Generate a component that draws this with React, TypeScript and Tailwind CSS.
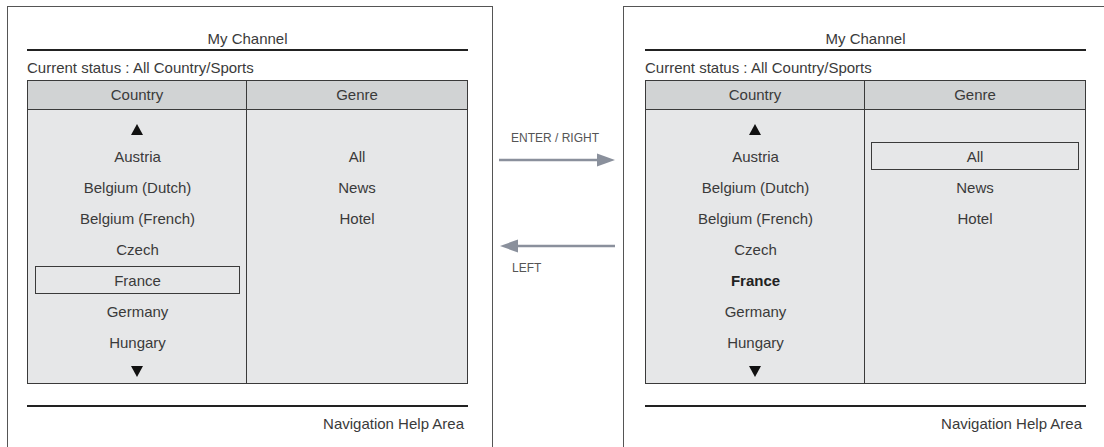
import React from 'react';

const countries = [
  'Austria',
  'Belgium (Dutch)',
  'Belgium (French)',
  'Czech',
  'France',
  'Germany',
  'Hungary',
];

const genres = ['All', 'News', 'Hotel'];

interface RowProps {
  label: string;
  boxed?: boolean;
  bold?: boolean;
  inset: string;
}

const Row: React.FC<RowProps> = ({ label, boxed, bold, inset }) => (
  <div className={`h-[31px] ${inset}`}>
    <div
      className={`h-[28px] pt-[2px] flex items-center justify-center border ${
        boxed ? 'border-[#3a3a3a]' : 'border-transparent'
      } ${bold ? 'font-bold text-[#222]' : ''}`}
    >
      {label}
    </div>
  </div>
);

const Triangle: React.FC<{ down?: boolean }> = ({ down }) => (
  <svg width="12" height="11" viewBox="0 0 12 11">
    <polygon points={down ? '0,0 12,0 6,11' : '6,0 12,11 0,11'} fill="#111" />
  </svg>
);

interface PanelProps {
  side: 'left' | 'right';
}

const Panel: React.FC<PanelProps> = ({ side }) => {
  const left = side === 'left';
  return (
    <div
      className={`shrink-0 w-[486px] h-[470px] border-l border-t border-r border-[#555] ${
        left ? 'ml-[7px]' : ''
      } mt-[6px]`}
    >
      <div className={`w-[441px] ${left ? 'ml-[19px]' : 'ml-[21px]'}`}>
        <div className="pt-[24px] h-[40px] leading-[16px] text-center">My Channel</div>
        <div className="mt-[2px] h-[2px] bg-[#222]" />
        <div className="mt-[9px] leading-[16px]">Current status : All Country/Sports</div>
        <div className="mt-[4px] border border-[#3a3a3a]">
          <div className="flex h-[29px] bg-[#d1d3d4] border-b border-[#3a3a3a]">
            <div className="w-[219px] flex items-center justify-center border-r border-[#3a3a3a]">
              Country
            </div>
            <div className="flex-1 flex items-center justify-center">Genre</div>
          </div>
          <div className="flex bg-[#e6e7e8]">
            <div className="w-[219px] border-r border-[#3a3a3a] pt-[7px] text-center">
              <div className="h-[25px] flex items-center justify-center">
                <Triangle />
              </div>
              {countries.map((c) => (
                <Row
                  key={c}
                  label={c}
                  inset="pl-[7px] pr-[6px]"
                  boxed={left && c === 'France'}
                  bold={!left && c === 'France'}
                />
              ))}
              <div className="h-[24px] flex items-center justify-center">
                <Triangle down />
              </div>
            </div>
            <div className="flex-1 pt-[32px]">
              {genres.map((g) => (
                <Row key={g} label={g} inset="px-[6px]" boxed={!left && g === 'All'} />
              ))}
            </div>
          </div>
        </div>
        <div className="mt-[21px] h-[2px] bg-[#222]" />
        <div className="mt-[9px] leading-[16px] text-right pr-[4px]">Navigation Help Area</div>
      </div>
    </div>
  );
};

const Arrows: React.FC = () => (
  <div className="shrink-0 w-[130px] pt-[131px] text-[12px] leading-[14px] text-[#555]">
    <div className="pl-[18px]">ENTER / RIGHT</div>
    <svg className="mt-[8px] block" width="130" height="14" viewBox="0 0 130 14">
      <line x1="6" y1="7" x2="106" y2="7" stroke="#8a909c" strokeWidth="2.5" />
      <polygon points="104,0.5 122,7 104,13.5" fill="#8a909c" />
    </svg>
    <svg className="mt-[72px] block" width="130" height="14" viewBox="0 0 130 14">
      <polygon points="25,0.5 7,7 25,13.5" fill="#8a909c" />
      <line x1="23" y1="7" x2="122" y2="7" stroke="#8a909c" strokeWidth="2.5" />
    </svg>
    <div className="mt-[8px] pl-[19px]">LEFT</div>
  </div>
);

export default function App() {
  return (
    <div
      className="flex w-[1104px] h-[447px] overflow-hidden bg-white text-[15px] text-[#3a3a3a]"
      style={{ fontFamily: '"Liberation Sans", Arial, sans-serif' }}
    >
      <Panel side="left" />
      <Arrows />
      <Panel side="right" />
    </div>
  );
}
